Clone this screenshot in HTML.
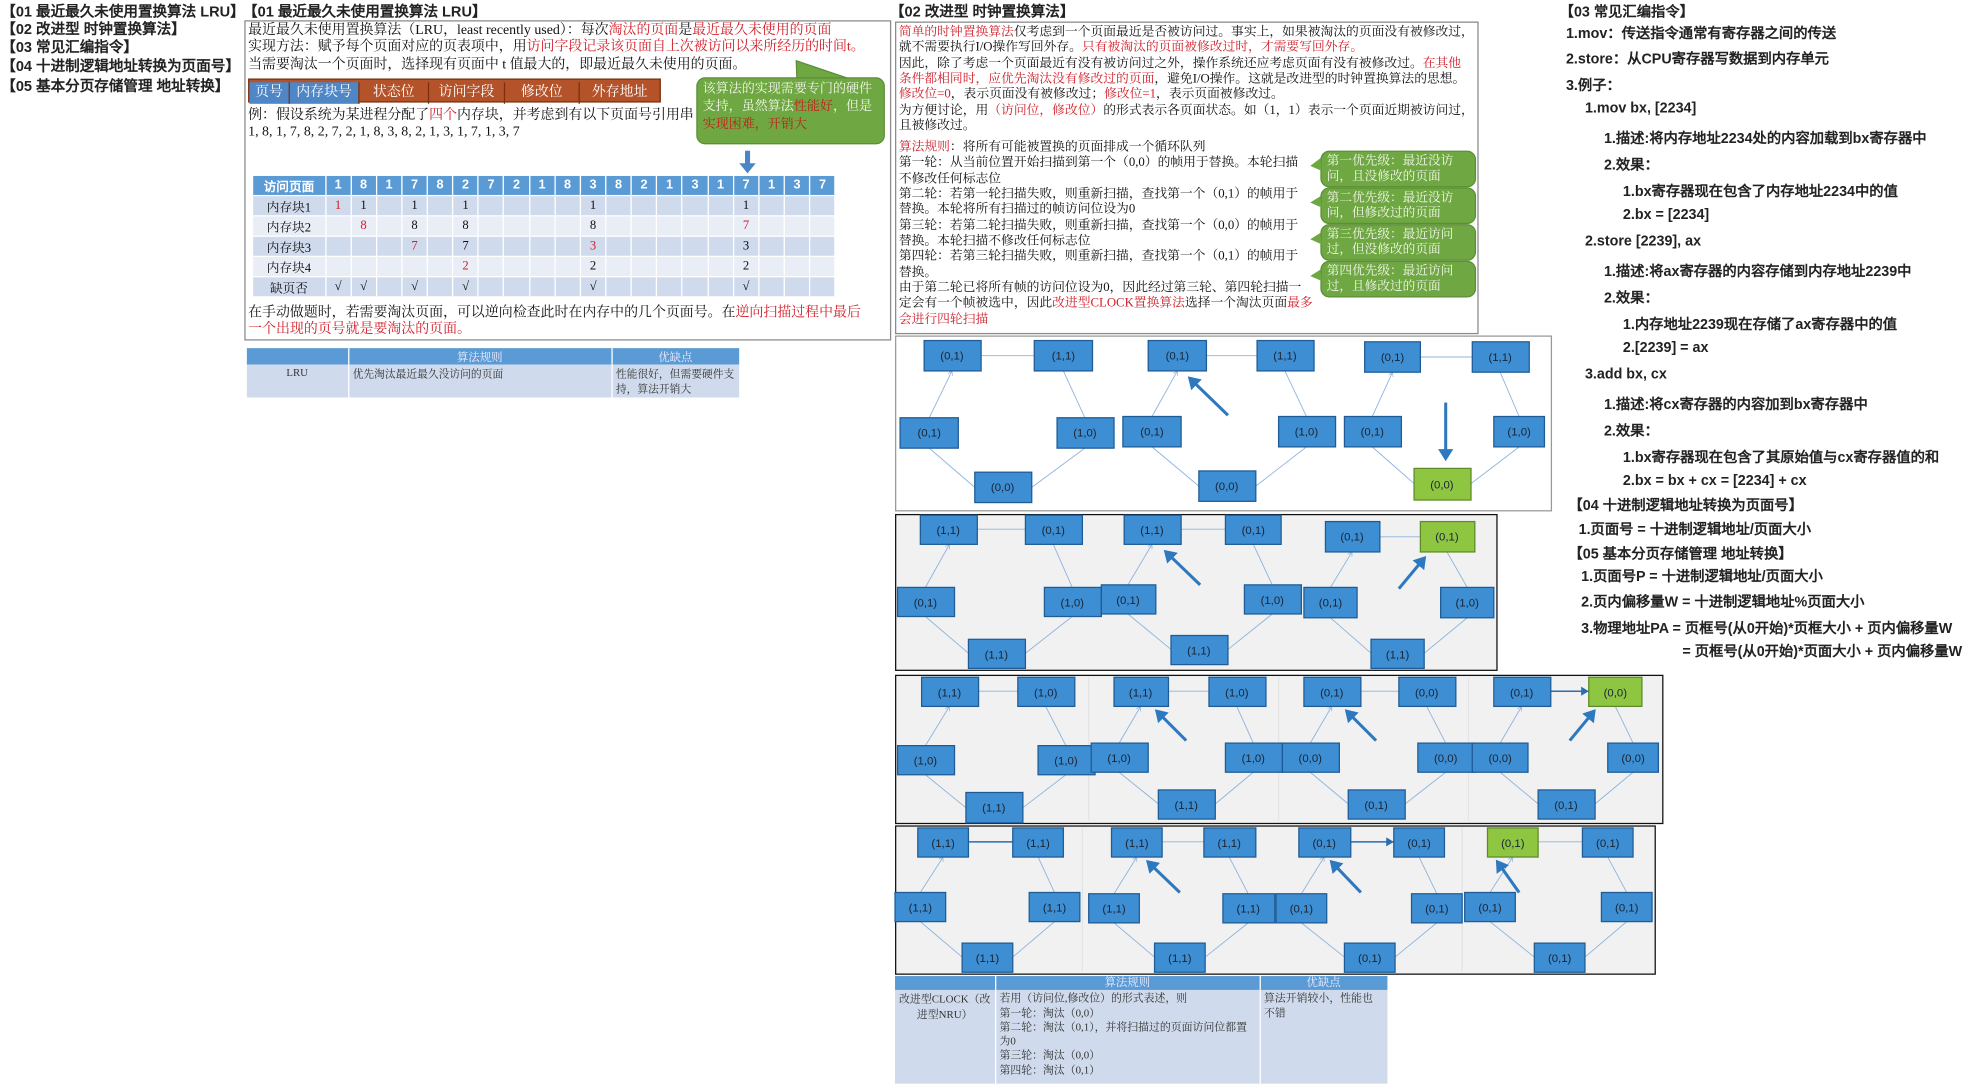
<!DOCTYPE html>
<html><head><meta charset="utf-8">
<style>
html,body{margin:0;padding:0;background:#fff;}
body{width:1985px;height:1085px;overflow:hidden;position:relative;}
#s{position:absolute;left:0;top:0;width:1568px;height:857px;transform:scale(1.26594);transform-origin:0 0;font-family:"Liberation Serif","Noto Serif CJK SC",serif;color:#111;}
.a{position:absolute;white-space:nowrap;}
.h{font-family:"Liberation Sans","WenQuanYi Zen Hei",sans-serif;font-weight:bold;font-size:11.5px;color:#222;}
.r{color:#d0202a;}
.bx{position:absolute;border:1px solid #8a8a8a;background:#fff;}
.t1{font-size:11px;line-height:13.3px;}
.t2{font-size:10.1px;line-height:12.35px;}
.hdr span{display:inline-block;height:17px;line-height:17px;text-align:center;color:#fff;font-size:11px;border-right:1px solid #7a3010;}
.bub{position:absolute;background:#6fa842;border:1px solid #5b8e36;border-radius:7px;color:#f2f7ea;font-size:10px;line-height:12px;padding:2px 4px;}
table.lru{position:absolute;border-collapse:collapse;table-layout:fixed;font-size:10px;}
table.lru td{height:15px;padding:0;text-align:center;border-right:1px solid #fff;border-bottom:1px solid #fff;}
table.lru tr.hd td{background:#5b9bd5;color:#fff;font-weight:bold;font-family:"Liberation Sans",sans-serif;height:14px;}
table.lru tr.o td{background:#cfdaec;}
table.lru tr.e td{background:#e8edf6;}
.sum{position:absolute;border-collapse:collapse;table-layout:fixed;font-size:8.5px;color:#333;}
.sum td{vertical-align:top;padding:1px 3px;border-right:1px solid #fff;background:#cfdaec;}
.sum tr.hd td{background:#5b9bd5;color:#eef;text-align:center;height:11px;padding:0;font-size:9px;}
.rt{font-family:"Liberation Sans","WenQuanYi Zen Hei",sans-serif;font-weight:bold;font-size:11.3px;color:#222;position:absolute;white-space:nowrap;}
svg text{font-family:"Liberation Sans","Noto Sans CJK SC",sans-serif;font-size:9px;fill:#1a2436;text-anchor:middle;}
.b{fill:#3d8ed2;stroke:#1f5c96;stroke-width:1;}
.g{fill:#8fc641;stroke:#5f8a2a;stroke-width:1;}
.l{stroke:#8db3dc;stroke-width:0.7;fill:none;marker-end:url(#ah);}
.s{stroke:#2a6db0;stroke-width:1.2;fill:none;marker-end:url(#ah2);}
.big{stroke:#2e78bf;stroke-width:2.4;fill:none;marker-end:url(#bh);}
</style></head><body><div id="s">

<div class="a h" style="left:1px;top:1px">【01 最近最久未使用置换算法 LRU】</div>
<div class="a h" style="left:1px;top:15px">【02 改进型 时钟置换算法】</div>
<div class="a h" style="left:1px;top:29px">【03 常见汇编指令】</div>
<div class="a h" style="left:1px;top:44px">【04 十进制逻辑地址转换为页面号】</div>
<div class="a h" style="left:1px;top:60px">【05 基本分页存储管理 地址转换】</div>

<div class="a h" style="left:192px;top:1px">【01 最近最久未使用置换算法 LRU】</div>
<div class="bx" style="left:193px;top:16px;width:509px;height:251px"></div>
<div class="a t1" style="left:196px;top:18px">最近最久未使用置换算法（LRU，least recently used）：每次<span class="r">淘汰的页面</span>是<span class="r">最近最久未使用的页面</span><br>实现方法：赋予每个页面对应的页表项中，用<span class="r">访问字段记录该页面自上次被访问以来所经历的时间t。</span><br>当需要淘汰一个页面时，选择现有页面中 t 值最大的，即最近最久未使用的页面。</div>
<div class="a hdr" style="left:196px;top:62px;height:17px;background:#b4532a;border:1px solid #7a3010">
<span style="width:31px;background:#4f86c6">页号</span><span style="width:54px;background:#4f86c6">内存块号</span><span style="width:54px">状态位</span><span style="width:59px">访问字段</span><span style="width:58px">修改位</span><span style="width:63px;border:none">外存地址</span></div>
<div class="a t1" style="left:196px;top:85px">例：假设系统为某进程分配了<span class="r">四个</span>内存块，并考虑到有以下页面号引用串<br>1, 8, 1, 7, 8, 2, 7, 2, 1, 8, 3, 8, 2, 1, 3, 1, 7, 1, 3, 7</div>
<svg class="a" style="left:600px;top:40px" width="110" height="40"><path d="M30 38 L29 8 L82 26 Z" fill="#6fa842" stroke="#5b8e36" stroke-width="1"/></svg>
<div class="bub" style="left:550px;top:61px;width:139px;height:47px;font-size:10.3px;line-height:14px">该算法的实现需要专门的硬件支持，虽然算法<span style="color:#c0201a">性能好</span>，但是<span style="color:#c0201a">实现困难，开销大</span></div>
<svg class="a" style="left:584px;top:119px" width="14" height="20"><rect x="4.5" y="0" width="4" height="11" fill="#4a86c4"/><path d="M0 10 L13 10 L6.5 18 Z" fill="#4a86c4"/></svg>
<table class="lru" style="left:200px;top:139px;width:460px">
<colgroup><col style="width:57px"><col span="20" style="width:20.15px"></colgroup>
<tr class="hd"><td>访问页面</td><td>1</td><td>8</td><td>1</td><td>7</td><td>8</td><td>2</td><td>7</td><td>2</td><td>1</td><td>8</td><td>3</td><td>8</td><td>2</td><td>1</td><td>3</td><td>1</td><td>7</td><td>1</td><td>3</td><td>7</td></tr>
<tr class="o"><td>内存块1</td><td class="r">1</td><td>1</td><td></td><td>1</td><td></td><td>1</td><td></td><td></td><td></td><td></td><td>1</td><td></td><td></td><td></td><td></td><td></td><td>1</td><td></td><td></td><td></td></tr>
<tr class="e"><td>内存块2</td><td></td><td class="r">8</td><td></td><td>8</td><td></td><td>8</td><td></td><td></td><td></td><td></td><td>8</td><td></td><td></td><td></td><td></td><td></td><td class="r">7</td><td></td><td></td><td></td></tr>
<tr class="o"><td>内存块3</td><td></td><td></td><td></td><td class="r">7</td><td></td><td>7</td><td></td><td></td><td></td><td></td><td class="r">3</td><td></td><td></td><td></td><td></td><td></td><td>3</td><td></td><td></td><td></td></tr>
<tr class="e"><td>内存块4</td><td></td><td></td><td></td><td></td><td></td><td class="r">2</td><td></td><td></td><td></td><td></td><td>2</td><td></td><td></td><td></td><td></td><td></td><td>2</td><td></td><td></td><td></td></tr>
<tr class="o"><td>缺页否</td><td>√</td><td>√</td><td></td><td>√</td><td></td><td>√</td><td></td><td></td><td></td><td></td><td>√</td><td></td><td></td><td></td><td></td><td></td><td>√</td><td></td><td></td><td></td></tr>
</table>
<div class="a t1" style="left:196px;top:241px">在手动做题时，若需要淘汰页面，可以逆向检查此时在内存中的几个页面号。在<span class="r">逆向扫描过程中最后</span><br><span class="r">一个出现的页号就是要淘汰的页面。</span></div>
<table class="sum" style="left:195px;top:275px;width:389px">
<colgroup><col style="width:80px"><col style="width:208px"><col style="width:101px"></colgroup>
<tr class="hd"><td></td><td>算法规则</td><td>优缺点</td></tr>
<tr><td style="text-align:center;height:24px">LRU</td><td>优先淘汰最近最久没访问的页面</td><td>性能很好，但需要硬件支持，算法开销大</td></tr>
</table>

<div class="a h" style="left:703px;top:1px">【02 改进型 时钟置换算法】</div>
<div class="bx" style="left:707px;top:17px;width:459px;height:245px"></div>
<div class="a t2" style="left:710px;top:20px"><span class="r">简单的时钟置换算法</span>仅考虑到一个页面最近是否被访问过。事实上，如果被淘汰的页面没有被修改过，<br>就不需要执行I/O操作写回外存。<span class="r">只有被淘汰的页面被修改过时，才需要写回外存。</span><br>因此，除了考虑一个页面最近有没有被访问过之外，操作系统还应考虑页面有没有被修改过。<span class="r">在其他</span><br><span class="r">条件都相同时，应优先淘汰没有修改过的页面</span>，避免I/O操作。这就是改进型的时钟置换算法的思想。<br><span class="r">修改位=0</span>，表示页面没有被修改过；<span class="r">修改位=1</span>，表示页面被修改过。<br>为方便讨论，用<span class="r">（访问位，修改位）</span>的形式表示各页面状态。如（1，1）表示一个页面近期被访问过，<br>且被修改过。</div>
<div class="a t2" style="left:710px;top:111px"><span class="r">算法规则</span>：将所有可能被置换的页面排成一个循环队列<br>第一轮：从当前位置开始扫描到第一个（0,0）的帧用于替换。本轮扫描<br>不修改任何标志位<br>第二轮：若第一轮扫描失败，则重新扫描，查找第一个（0,1）的帧用于<br>替换。本轮将所有扫描过的帧访问位设为0<br>第三轮：若第二轮扫描失败，则重新扫描，查找第一个（0,0）的帧用于<br>替换。本轮扫描不修改任何标志位<br>第四轮：若第三轮扫描失败，则重新扫描，查找第一个（0,1）的帧用于<br>替换。<br>由于第二轮已将所有帧的访问位设为0，因此经过第三轮、第四轮扫描一<br>定会有一个帧被选中，因此<span class="r">改进型CLOCK置换算法</span>选择一个淘汰页面<span class="r">最多</span><br><span class="r">会进行四轮扫描</span></div>
<div class="bub" style="left:1043px;top:119px;width:113px;height:23px">第一优先级：最近没访问，且没修改的页面</div>
<div class="bub" style="left:1043px;top:148px;width:113px;height:23px">第二优先级：最近没访问，但修改过的页面</div>
<div class="bub" style="left:1043px;top:177px;width:113px;height:23px">第三优先级：最近访问过，但没修改的页面</div>
<div class="bub" style="left:1043px;top:206px;width:113px;height:23px">第四优先级：最近访问过，且修改过的页面</div>
<svg class="a" style="left:1030px;top:115px" width="20" height="120"><path d="M13 10 L5 16 L14 20Z M13 40 L5 45 L14 49Z M13 69 L5 74 L14 78Z M13 98 L5 103 L14 107Z" fill="#6fa842"/></svg>

<div class="a" style="left:707px;top:265px;width:517px;height:137px;border:1px solid #999;background:#fff"></div>
<div class="a" style="left:707px;top:406px;width:474px;height:122px;border:1px solid #111;background:#f1f1f1"></div>
<div class="a" style="left:707px;top:533px;width:605px;height:116px;border:1px solid #111;background:#f1f1f1"></div>
<div class="a" style="left:707px;top:652px;width:599px;height:116px;border:1px solid #111;background:#f1f1f1"></div>

<svg class="a" style="left:0;top:0" width="1568" height="857">
<defs>
<marker id="ah" markerWidth="6" markerHeight="6" refX="5" refY="3" orient="auto"><path d="M0 0 L5 3 L0 6" fill="none" stroke="#8db3dc" stroke-width="0.8"/></marker>
<marker id="ah2" markerWidth="6" markerHeight="6" refX="5" refY="3" orient="auto"><path d="M0 0 L5 3 L0 6Z" fill="#2a6db0"/></marker>
<marker id="bh" markerWidth="5" markerHeight="5" refX="3" refY="2.5" orient="auto"><path d="M0 0 L4 2.5 L0 5Z" fill="#2e78bf"/></marker>
</defs>
<g stroke="#e4e4e4" stroke-width="1"><line x1="860" y1="535" x2="860" y2="648"/><line x1="1010" y1="535" x2="1010" y2="648"/><line x1="1160" y1="535" x2="1160" y2="648"/><line x1="855" y1="654" x2="855" y2="767"/><line x1="1155" y1="654" x2="1155" y2="767"/></g>

<path class="l" d="M775 281L817 281M840 293L857 330M857 354L815 385M770 385L734 354M734 330L752 293"/>
<path class="l" d="M953 281L993 281M1015 293L1032 329M1032 353L992 384M947 384L910 353M910 329L930 293"/>
<path class="l" d="M1122 282L1163 282M1185 294L1200 329M1200 353L1162 382M1117 382L1084 353M1084 329L1100 294"/>
<rect class="b" x="730" y="269" width="45" height="24"/><text x="752" y="284">(0,1)</text>
<rect class="b" x="817" y="269" width="46" height="24"/><text x="840" y="284">(1,1)</text>
<rect class="b" x="711" y="330" width="46" height="24"/><text x="734" y="345">(0,1)</text>
<rect class="b" x="835" y="330" width="45" height="24"/><text x="857" y="345">(1,0)</text>
<rect class="b" x="770" y="373" width="45" height="24"/><text x="792" y="388">(0,0)</text>
<rect class="b" x="907" y="269" width="46" height="24"/><text x="930" y="284">(0,1)</text>
<rect class="b" x="993" y="269" width="45" height="24"/><text x="1015" y="284">(1,1)</text>
<rect class="b" x="887" y="329" width="46" height="24"/><text x="910" y="344">(0,1)</text>
<rect class="b" x="1010" y="329" width="45" height="24"/><text x="1032" y="344">(1,0)</text>
<rect class="b" x="947" y="372" width="45" height="24"/><text x="969" y="387">(0,0)</text>
<rect class="b" x="1078" y="270" width="44" height="24"/><text x="1100" y="285">(0,1)</text>
<rect class="b" x="1163" y="270" width="45" height="24"/><text x="1185" y="285">(1,1)</text>
<rect class="b" x="1062" y="329" width="45" height="24"/><text x="1084" y="344">(0,1)</text>
<rect class="b" x="1180" y="329" width="40" height="24"/><text x="1200" y="344">(1,0)</text>
<rect class="g" x="1117" y="370" width="45" height="25"/><text x="1139" y="386">(0,0)</text>
<line class="big" x1="970" y1="328" x2="940" y2="299"/>
<line class="big" x1="1142" y1="318" x2="1142" y2="362"/>

<path class="l" d="M772 418L810 418M832 430L847 464M847 487L810 516M765 516L731 487M731 464L750 430"/>
<path class="l" d="M933 418L968 418M990 430L1005 462M1005 485L970 513M925 513L891 485M891 462L910 430"/>
<path class="l" d="M1090 424L1122 424M1143 436L1159 464M1159 488L1125 516M1083 516L1051 488M1051 464L1068 436"/>
<rect class="b" x="727" y="407" width="45" height="23"/><text x="749" y="422">(1,1)</text>
<rect class="b" x="810" y="407" width="45" height="23"/><text x="832" y="422">(0,1)</text>
<rect class="b" x="709" y="464" width="45" height="23"/><text x="731" y="479">(0,1)</text>
<rect class="b" x="825" y="464" width="45" height="23"/><text x="847" y="479">(1,0)</text>
<rect class="b" x="765" y="505" width="45" height="23"/><text x="787" y="520">(1,1)</text>
<rect class="b" x="888" y="407" width="45" height="23"/><text x="910" y="422">(1,1)</text>
<rect class="b" x="968" y="407" width="44" height="23"/><text x="990" y="422">(0,1)</text>
<rect class="b" x="870" y="462" width="43" height="23"/><text x="891" y="477">(0,1)</text>
<rect class="b" x="983" y="462" width="45" height="23"/><text x="1005" y="477">(1,0)</text>
<rect class="b" x="925" y="502" width="45" height="23"/><text x="947" y="517">(1,1)</text>
<rect class="b" x="1047" y="412" width="43" height="24"/><text x="1068" y="427">(0,1)</text>
<rect class="g" x="1122" y="412" width="43" height="24"/><text x="1143" y="427">(0,1)</text>
<rect class="b" x="1030" y="464" width="42" height="24"/><text x="1051" y="479">(0,1)</text>
<rect class="b" x="1138" y="464" width="42" height="24"/><text x="1159" y="479">(1,0)</text>
<rect class="b" x="1083" y="505" width="42" height="23"/><text x="1104" y="520">(1,1)</text>
<line class="big" x1="948" y1="462" x2="921" y2="436"/>
<line class="big" x1="1105" y1="465" x2="1125" y2="441"/>

<path class="l" d="M773 546L804 546M826 558L842 589M842 612L808 638M763 638L731 612M731 589L750 558"/>
<path class="l" d="M923 546L955 546M977 558L990 587M990 610L960 635M915 635L884 610M884 587L901 558"/>
<path class="l" d="M1075 546L1105 546M1127 558L1142 587M1142 610L1110 635M1065 635L1035 610M1035 587L1052 558"/>
<path class="l" d="M1276 558L1290 587M1290 610L1260 635M1215 635L1185 610M1185 587L1202 558"/>
<path class="s" d="M1225 546L1255 546"/>
<rect class="b" x="728" y="535" width="45" height="23"/><text x="750" y="550">(1,1)</text>
<rect class="b" x="804" y="535" width="45" height="23"/><text x="826" y="550">(1,0)</text>
<rect class="b" x="709" y="589" width="45" height="23"/><text x="731" y="604">(1,0)</text>
<rect class="b" x="820" y="589" width="45" height="23"/><text x="842" y="604">(1,0)</text>
<rect class="b" x="763" y="626" width="45" height="24"/><text x="785" y="641">(1,1)</text>
<rect class="b" x="880" y="535" width="43" height="23"/><text x="901" y="550">(1,1)</text>
<rect class="b" x="955" y="535" width="45" height="23"/><text x="977" y="550">(1,0)</text>
<rect class="b" x="862" y="587" width="45" height="23"/><text x="884" y="602">(1,0)</text>
<rect class="b" x="968" y="587" width="45" height="23"/><text x="990" y="602">(1,0)</text>
<rect class="b" x="915" y="624" width="45" height="23"/><text x="937" y="639">(1,1)</text>
<rect class="b" x="1030" y="535" width="45" height="23"/><text x="1052" y="550">(0,1)</text>
<rect class="b" x="1105" y="535" width="45" height="23"/><text x="1127" y="550">(0,0)</text>
<rect class="b" x="1013" y="587" width="45" height="23"/><text x="1035" y="602">(0,0)</text>
<rect class="b" x="1120" y="587" width="45" height="23"/><text x="1142" y="602">(0,0)</text>
<rect class="b" x="1065" y="624" width="45" height="23"/><text x="1087" y="639">(0,1)</text>
<rect class="b" x="1180" y="535" width="45" height="23"/><text x="1202" y="550">(0,1)</text>
<rect class="g" x="1255" y="535" width="42" height="23"/><text x="1276" y="550">(0,0)</text>
<rect class="b" x="1163" y="587" width="44" height="23"/><text x="1185" y="602">(0,0)</text>
<rect class="b" x="1270" y="587" width="40" height="23"/><text x="1290" y="602">(0,0)</text>
<rect class="b" x="1215" y="624" width="45" height="23"/><text x="1237" y="639">(0,1)</text>
<line class="big" x1="937" y1="585" x2="914" y2="562"/>
<line class="big" x1="1087" y1="585" x2="1064" y2="562"/>
<line class="big" x1="1240" y1="585" x2="1259" y2="562"/>

<path class="l" d="M820 677L833 705M833 728L800 756M760 756L727 728M727 705L745 677"/>
<path class="l" d="M918 665L951 665M971 677L986 706M986 729L952 756M912 756L880 729M880 706L898 677"/>
<path class="l" d="M1121 677L1135 706M1135 729L1102 756M1062 756L1028 729M1028 706L1046 677"/>
<path class="l" d="M1215 665L1250 665M1270 677L1285 705M1285 728L1252 756M1212 756L1177 728M1177 705L1195 677"/>
<path class="s" d="M765 665L800 665M1067 665L1101 665"/>
<rect class="b" x="725" y="654" width="40" height="23"/><text x="745" y="669">(1,1)</text>
<rect class="b" x="800" y="654" width="40" height="23"/><text x="820" y="669">(1,1)</text>
<rect class="b" x="707" y="705" width="40" height="23"/><text x="727" y="720">(1,1)</text>
<rect class="b" x="813" y="705" width="40" height="23"/><text x="833" y="720">(1,1)</text>
<rect class="b" x="760" y="745" width="40" height="23"/><text x="780" y="760">(1,1)</text>
<rect class="b" x="878" y="654" width="40" height="23"/><text x="898" y="669">(1,1)</text>
<rect class="b" x="951" y="654" width="41" height="23"/><text x="971" y="669">(1,1)</text>
<rect class="b" x="860" y="706" width="40" height="23"/><text x="880" y="721">(1,1)</text>
<rect class="b" x="966" y="706" width="41" height="23"/><text x="986" y="721">(1,1)</text>
<rect class="b" x="912" y="745" width="40" height="23"/><text x="932" y="760">(1,1)</text>
<rect class="b" x="1026" y="654" width="41" height="23"/><text x="1046" y="669">(0,1)</text>
<rect class="b" x="1101" y="654" width="40" height="23"/><text x="1121" y="669">(0,1)</text>
<rect class="b" x="1008" y="706" width="40" height="23"/><text x="1028" y="721">(0,1)</text>
<rect class="b" x="1115" y="706" width="40" height="23"/><text x="1135" y="721">(0,1)</text>
<rect class="b" x="1062" y="745" width="40" height="23"/><text x="1082" y="760">(0,1)</text>
<rect class="g" x="1175" y="654" width="40" height="23"/><text x="1195" y="669">(0,1)</text>
<rect class="b" x="1250" y="654" width="40" height="23"/><text x="1270" y="669">(0,1)</text>
<rect class="b" x="1157" y="705" width="40" height="23"/><text x="1177" y="720">(0,1)</text>
<rect class="b" x="1265" y="705" width="40" height="23"/><text x="1285" y="720">(0,1)</text>
<rect class="b" x="1212" y="745" width="40" height="23"/><text x="1232" y="760">(0,1)</text>
<line class="big" x1="932" y1="705" x2="907" y2="681"/>
<line class="big" x1="1075" y1="705" x2="1052" y2="681"/>
<line class="big" x1="1200" y1="705" x2="1183" y2="681"/>
</svg>

<table class="sum" style="left:707px;top:771px;width:389px;font-size:8.6px;line-height:11.3px">
<colgroup><col style="width:79px"><col style="width:209px"><col style="width:101px"></colgroup>
<tr class="hd"><td></td><td>算法规则</td><td>优缺点</td></tr>
<tr><td style="height:70px;text-align:center;padding:2px 0">改进型CLOCK（改进型NRU）</td><td>若用（访问位,修改位）的形式表述，则<br>第一轮：淘汰（0,0）<br>第二轮：淘汰（0,1），并将扫描过的页面访问位都置为0<br>第三轮：淘汰（0,0）<br>第四轮：淘汰（0,1）</td><td>算法开销较小，性能也不错</td></tr>
</table>

<div class="rt" style="left:1232px;top:1px">【03 常见汇编指令】</div>
<div class="rt" style="left:1237px;top:18px">1.mov：传送指令通常有寄存器之间的传送</div>
<div class="rt" style="left:1237px;top:38px">2.store：从CPU寄存器写数据到内存单元</div>
<div class="rt" style="left:1237px;top:59px">3.例子：</div>
<div class="rt" style="left:1252px;top:80px">1.mov bx, [2234]</div>
<div class="rt" style="left:1267px;top:101px">1.描述:将内存地址2234处的内容加载到bx寄存器中</div>
<div class="rt" style="left:1267px;top:122px">2.效果：</div>
<div class="rt" style="left:1282px;top:143px">1.bx寄存器现在包含了内存地址2234中的值</div>
<div class="rt" style="left:1282px;top:164px">2.bx = [2234]</div>
<div class="rt" style="left:1252px;top:185px">2.store [2239], ax</div>
<div class="rt" style="left:1267px;top:206px">1.描述:将ax寄存器的内容存储到内存地址2239中</div>
<div class="rt" style="left:1267px;top:227px">2.效果：</div>
<div class="rt" style="left:1282px;top:248px">1.内存地址2239现在存储了ax寄存器中的值</div>
<div class="rt" style="left:1282px;top:269px">2.[2239] = ax</div>
<div class="rt" style="left:1252px;top:290px">3.add bx, cx</div>
<div class="rt" style="left:1267px;top:311px">1.描述:将cx寄存器的内容加到bx寄存器中</div>
<div class="rt" style="left:1267px;top:332px">2.效果：</div>
<div class="rt" style="left:1282px;top:353px">1.bx寄存器现在包含了其原始值与cx寄存器值的和</div>
<div class="rt" style="left:1282px;top:374px">2.bx = bx + cx = [2234] + cx</div>
<div class="rt" style="left:1239px;top:391px">【04 十进制逻辑地址转换为页面号】</div>
<div class="rt" style="left:1247px;top:410px">1.页面号 = 十进制逻辑地址/页面大小</div>
<div class="rt" style="left:1239px;top:429px">【05 基本分页存储管理 地址转换】</div>
<div class="rt" style="left:1249px;top:447px">1.页面号P = 十进制逻辑地址/页面大小</div>
<div class="rt" style="left:1249px;top:467px">2.页内偏移量W = 十进制逻辑地址%页面大小</div>
<div class="rt" style="left:1249px;top:488px">3.物理地址PA = 页框号(从0开始)*页框大小 + 页内偏移量W</div>
<div class="rt" style="left:1329px;top:506px">= 页框号(从0开始)*页面大小 + 页内偏移量W</div>
</div></body></html>
